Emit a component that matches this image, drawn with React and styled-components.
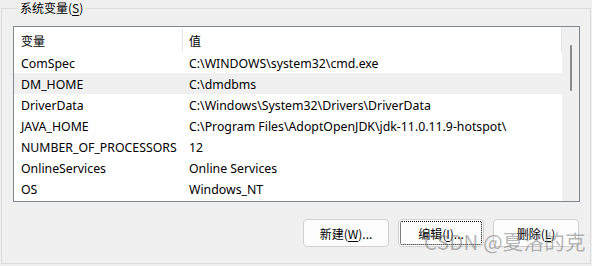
import React from 'react';
import styled, { createGlobalStyle } from 'styled-components';

const GlobalStyle = createGlobalStyle`
    html, body {
        margin: 0;
        padding: 0;
        background: #f0f0f0;
    }
    body {
        width: 592px;
        height: 266px;
        overflow: hidden;
        font-family: "Noto Sans", "Noto Sans CJK SC", sans-serif;
        font-size: 12.3px;
        color: #000;
    }
`;

const Page = styled.div`
    position: relative;
    width: 592px;
    height: 266px;
    padding: 0 1px;
    box-sizing: border-box;
`;

const Group = styled.fieldset`
    margin: 0;
    padding: 0 10px 15px 11px;
    height: 264px;
    box-sizing: border-box;
    border: 1px solid #dcdcdc;
    display: flex;
    flex-direction: column;
`;

const Legend = styled.legend`
    margin-left: 5px;
    padding: 0 2px;
    line-height: 16px;
    font-family: "Noto Sans CJK SC", sans-serif;
    font-size: 12px;
`;

const Key = styled.u`
    text-decoration-thickness: 1px;
    text-underline-offset: 2px;
`;

const List = styled.div`
    margin-top: 10px;
    height: 176px;
    box-sizing: border-box;
    border: 1px solid #828790;
    background: #fff;
    display: flex;
`;

const Body = styled.div`
    flex: 1;
    display: flex;
    flex-direction: column;
`;

const Header = styled.div`
    display: flex;
    height: 25px;
    align-items: stretch;
    border-right: 1px solid #e5e5e5;
`;

const HeadCell = styled.div`
    width: ${p => p.$w ? `${p.$w}px` : 'auto'};
    flex: ${p => p.$w ? 'none' : 1};
    display: flex;
    align-items: center;
    padding-left: ${p => p.$pad}px;
    box-sizing: border-box;
    font-family: "Noto Sans CJK SC", sans-serif;
    font-size: 12px;
    border-right: ${p => p.$sep ? '1px solid #e5e5e5' : 'none'};
    margin: 1px 0 0;
`;

const Row = styled.div`
    display: flex;
    height: 21px;
    line-height: 21px;
    padding-top: 1px;
    box-sizing: border-box;
    background: ${p => p.$hover ? '#f0f0f0' : 'transparent'};
    white-space: nowrap;
`;

const Cell = styled.div`
    width: ${p => p.$w ? `${p.$w}px` : 'auto'};
    flex: ${p => p.$w ? 'none' : 1};
    padding-left: ${p => p.$pad}px;
    box-sizing: border-box;
`;

const ScrollBar = styled.div`
    width: 17px;
    background: #f0f0f0;
    display: flex;
    justify-content: center;
    padding-top: 18px;
    box-sizing: border-box;
`;

const Thumb = styled.div`
    width: 2px;
    height: 46px;
    margin-left: 1px;
    background: #8a8a8a;
    border-radius: 1px;
`;

const Buttons = styled.div`
    display: flex;
    justify-content: flex-end;
    gap: 9px;
    margin-top: 17px;
    padding-right: 1px;
`;

const Button = styled.button`
    width: 86px;
    height: 28px;
    box-sizing: border-box;
    border: 1px solid #d0d0d0;
    border-radius: 4px;
    background: #fdfdfd;
    font-family: "Noto Sans CJK SC", sans-serif;
    font-size: 12px;
    color: #000;
    padding: 0;
    outline: ${p => p.$focus ? '1px dotted #000' : 'none'};
    outline-offset: -3px;
`;

const Watermark = styled.div`
    position: absolute;
    left: 424px;
    top: 226px;
    font-family: "Noto Sans CJK SC", sans-serif;
    font-size: 20.5px;
    color: rgba(120, 120, 120, 0.55);
    letter-spacing: 0.2px;
    pointer-events: none;
    white-space: nowrap;
`;

const rows = [
    ['ComSpec', 'C:\\WINDOWS\\system32\\cmd.exe'],
    ['DM_HOME', 'C:\\dmdbms'],
    ['DriverData', 'C:\\Windows\\System32\\Drivers\\DriverData'],
    ['JAVA_HOME', 'C:\\Program Files\\AdoptOpenJDK\\jdk-11.0.11.9-hotspot\\'],
    ['NUMBER_OF_PROCESSORS', '12'],
    ['OnlineServices', 'Online Services'],
    ['OS', 'Windows_NT'],
];

export default function App() {
    return (
        <>
            <GlobalStyle />
            <Page>
                <Group>
                    <Legend>系统变量(<Key>S</Key>)</Legend>
                    <List>
                        <Body>
                            <Header>
                                <HeadCell $w={169} $pad={7} $sep>变量</HeadCell>
                                <HeadCell $pad={6}>值</HeadCell>
                            </Header>
                            {rows.map(([name, value], i) => (
                                <Row key={name} $hover={i === 1}>
                                    <Cell $w={168} $pad={7}>{name}</Cell>
                                    <Cell $pad={7}>{value}</Cell>
                                </Row>
                            ))}
                        </Body>
                        <ScrollBar>
                            <Thumb />
                        </ScrollBar>
                    </List>
                    <Buttons>
                        <Button>新建(<Key>W</Key>)...</Button>
                        <Button $focus>编辑(<Key>I</Key>)...</Button>
                        <Button>删除(<Key>L</Key>)</Button>
                    </Buttons>
                </Group>
                <Watermark>CSDN @夏洛的克</Watermark>
            </Page>
        </>
    );
}
